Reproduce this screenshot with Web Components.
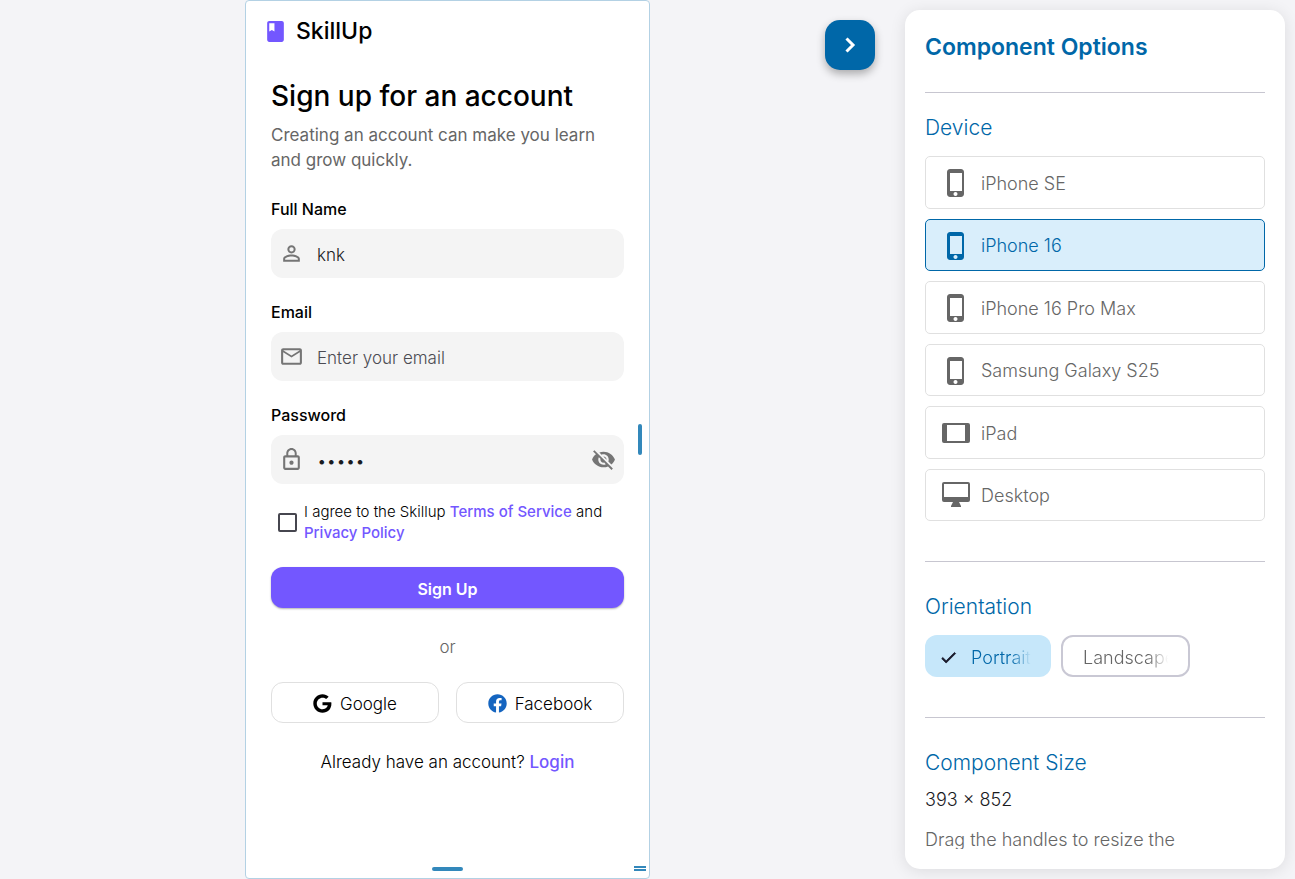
<!DOCTYPE html>
<html lang="en">
<head>
<meta charset="utf-8">
<meta name="viewport" content="width=device-width, initial-scale=1">
<title>SkillUp – Component preview</title>
<style>
  html { height: 100%; }
  body {
    margin: 0;
    min-height: 100%;
    background: #f4f4f7;
    font-family: Inter, "Liberation Sans", sans-serif;
    font-size: 17px;
    font-weight: 300;
    color: #000;
  }
</style>
</head>
<body>
<preview-app></preview-app>

<script>
const ICONS = {
  logo: ['0 0 24 24', '<path d="M18 2H6c-1.100 0-2 .9-2 2v16c0 1.100.9 2 2 2h12c1.100 0 2-.9 2-2V4c0-1.100-.9-2-2-2zM6 4h5v8l-2.500-1.500L6 12V4z"/>'],
  person: ['0 0 24 24', '<path d="M12 5.900a2.100 2.100 0 1 1 0 4.200 2.100 2.100 0 0 1 0-4.200m0 9c2.970 0 6.100 1.460 6.100 2.100v1.100H5.900V17c0-.64 3.130-2.100 6.100-2.100M12 4C9.790 4 8 5.790 8 8s1.790 4 4 4 4-1.790 4-4-1.790-4-4-4zm0 9c-2.670 0-8 1.340-8 4v3h16v-3c0-2.660-5.330-4-8-4z"/>'],
  mail: ['0 0 24 24', '<path d="M22 6c0-1.100-.9-2-2-2H4c-1.100 0-2 .9-2 2v12c0 1.100.9 2 2 2h16c1.100 0 2-.9 2-2V6zm-2 0l-8 5-8-5h16zm0 12H4V8l8 5 8-5v10z"/>'],
  lock: ['0 0 24 24', '<path d="M12 17c1.100 0 2-.9 2-2s-.9-2-2-2-2 .9-2 2 .9 2 2 2zm6-9h-1V6c0-2.760-2.240-5-5-5S7 3.240 7 6v2H6c-1.100 0-2 .9-2 2v10c0 1.100.9 2 2 2h12c1.100 0 2-.9 2-2V10c0-1.100-.9-2-2-2zM8.900 6c0-1.710 1.390-3.100 3.100-3.100s3.100 1.390 3.100 3.100v2H8.900V6zM18 20H6V10h12v10z"/>'],
  eyeOff: ['0 0 24 24', '<path d="M12 7c2.760 0 5 2.240 5 5 0 .65-.13 1.260-.36 1.830l2.920 2.920c1.510-1.260 2.700-2.890 3.430-4.750-1.730-4.390-6-7.500-11-7.500-1.400 0-2.740.25-3.980.7l2.160 2.160C10.740 7.130 11.350 7 12 7zM2 4.270l2.280 2.280.46.46C3.080 8.300 1.780 10.020 1 12c1.730 4.390 6 7.500 11 7.500 1.550 0 3.030-.3 4.380-.84l.42.42L19.730 22 21 20.730 3.270 3 2 4.270zM7.530 9.800l1.550 1.550c-.05.21-.08.43-.08.65 0 1.660 1.340 3 3 3 .22 0 .44-.03.65-.08l1.550 1.550c-.67.33-1.410.53-2.200.53-2.760 0-5-2.240-5-5 0-.79.2-1.530.53-2.200zm4.310-.78l3.150 3.150.02-.16c0-1.660-1.340-3-3-3l-.17.01z"/>'],
  google: ['0 0 496 512', '<path d="M488 261.800C488 403.300 391.100 504 248 504 110.800 504 0 393.200 0 256S110.800 8 248 8c66.800 0 123 24.500 166.300 64.900l-67.500 64.900C258.500 52.600 94.300 116.600 94.300 256c0 86.500 69.100 156.600 153.700 156.600 98.200 0 135-70.400 140.800-106.900H248v-85.300h236.100c2.300 12.700 3.900 24.900 3.900 41.400z"/>'],
  facebook: ['0 0 512 512', '<path d="M504 256C504 119 393 8 256 8S8 119 8 256c0 123.780 90.690 226.380 209.250 245V327.690h-63V256h63v-54.640c0-62.150 37-96.480 93.670-96.480 27.140 0 55.520 4.840 55.520 4.840v61h-31.280c-30.800 0-40.410 19.120-40.410 38.730V256h68.780l-11 71.690h-57.780V501C413.310 482.380 504 379.780 504 256z"/>'],
  phone: ['0 0 32 32', '<path fill-rule="evenodd" d="M10.500 2h10A3 3 0 0 1 24 5v22a3 3 0 0 1-3.500 3h-10A3 3 0 0 1 7 27V5a3 3 0 0 1 3.500-3zM10 6v18h12V6zM15.500 25a2 2 0 1 0 .01 0z"/>'],
  tablet: ['0 0 32 32', '<path fill-rule="evenodd" d="M4 6h24a2 2 0 0 1 2 2v16a2 2 0 0 1-2 2H4a2 2 0 0 1-2-2V8a2 2 0 0 1 2-2zM7 8v16h18V8z"/>'],
  desktop: ['0 0 32 32', '<path fill-rule="evenodd" d="M4 2h24a2 2 0 0 1 2 2v16a2 2 0 0 1-2 2h-9l2 4v1H11v-1l2-4H4a2 2 0 0 1-2-2V4a2 2 0 0 1 2-2zM4 4v13h24V4z"/>'],
  check: ['0 0 24 24', '<path stroke="currentColor" d="M9 16.170L4.830 12l-1.420 1.410L9 19 21 7l-1.410-1.410z"/>']
};

function define(name, css, render) {
  customElements.define(name, class extends HTMLElement {
    connectedCallback() {
      if (this.shadowRoot) return;
      const root = this.attachShadow({ mode: 'open' });
      const tpl = document.createElement('template');
      tpl.innerHTML = `<style>*{box-sizing:border-box}${css}</style>${render(this)}`;
      root.append(tpl.content.cloneNode(true));
    }
  });
}

define('ui-icon', `
  :host { display: block; flex: none; width: 25px; height: 25px; }
  svg { display: block; width: 100%; height: 100%; fill: currentColor; }
`, el => {
  const [box, body] = ICONS[el.getAttribute('name')];
  return `<svg viewBox="${box}" aria-hidden="true">${body}</svg>`;
});

define('form-field', `
  :host { display: block; }
  label { display: block; font-size: 16px; line-height: 20px; font-weight: 500; margin-bottom: 10px; }
  .box { display: flex; align-items: center; height: 49px; padding: 0 8px; gap: 13px; border-radius: 12px; background: #f4f4f4; color: #757575; }
  input { flex: 1; min-width: 0; border: 0; padding: 2px 0 0; outline: 0; background: none; font: inherit; line-height: 24px; color: #1a1b1f; }
  input::placeholder { color: #4b4b52; opacity: 1; }
  button { border: 0; padding: 0; background: none; color: inherit; }
`, el => `
  <label for="f">${el.getAttribute('label')}</label>
  <div class="box"><ui-icon name="${el.getAttribute('icon')}"></ui-icon>
    <input id="f" type="${el.getAttribute('type') || 'text'}" value="${el.getAttribute('value') || ''}" placeholder="${el.getAttribute('placeholder') || ''}">
    ${el.getAttribute('type') === 'password' ? '<button type="button" aria-label="Show password"><ui-icon name="eyeOff"></ui-icon></button>' : ''}
  </div>`);

define('terms-check', `
  :host { display: block; }
  .row { display: flex; align-items: center; gap: 7px; padding-left: 7px; font-size: 15px; line-height: 21px; }
  input { appearance: none; flex: none; width: 19px; height: 19px; margin: 0; border: 2px solid #46464f; border-radius: 2px; }
`, () => `<div class="row"><input id="t" type="checkbox"><label for="t"><slot></slot></label></div>`);

define('text-link', `
  :host { display: inline; }
  a { color: #7357ff; font-weight: 500; text-decoration: none; }
`, () => `<a href="#"><slot></slot></a>`);

define('primary-button', `
  :host { display: block; }
  button { display: block; width: 100%; height: 41px; padding: 2px 0 0; border: 0; border-radius: 12px; background: #7357ff; color: #fff; font: inherit; font-size: 16px; font-weight: 600; box-shadow: 0 1px 2px rgba(0,0,0,.3); }
`, () => `<button type="submit"><slot></slot></button>`);

define('social-button', `
  :host { display: block; flex: 1; }
  button { display: flex; align-items: center; justify-content: center; gap: 8px; width: 100%; height: 41px; padding: 2px 0 0; border: 1px solid #e0e0e0; border-radius: 12px; background: #fff; color: #000; font: inherit; }
  ui-icon { width: 19px; height: 19px; }
  ui-icon[name=facebook] { color: #1565c0; }
`, el => `<button type="button"><ui-icon name="${el.getAttribute('icon')}"></ui-icon><slot></slot></button>`);

define('signup-screen', `
  :host { display: block; }
  header { display: flex; align-items: center; gap: 8px; height: 60px; padding: 0 17px; }
  header span { font-size: 23px; line-height: 30px; font-weight: 500; }
  header ui-icon { color: #7357ff; }
  form { padding: 15px 25px 0; }
  h1 { margin: 0; font-size: 28px; line-height: 40px; font-weight: 500; white-space: nowrap; }
  .lead { margin: 7px 0 26px; line-height: 25px; font-weight: 400; color: #666; }
  .fields { display: flex; flex-direction: column; gap: 24px; }
  terms-check { margin-top: 17px; }
  primary-button { margin-top: 24px; }
  .or { margin: 27px 0 23px; text-align: center; line-height: 24px; color: #666; }
  .social { display: flex; gap: 17px; }
  .login { margin: 27px 0; text-align: center; line-height: 24px; }
  p { margin: 0; }
`, () => `
  <header><ui-icon name="logo"></ui-icon><span>SkillUp</span></header>
  <form>
    <h1>Sign up for an account</h1>
    <p class="lead">Creating an account can make you learn and grow quickly.</p>
    <div class="fields">
      <form-field label="Full Name" icon="person" value="knk"></form-field>
      <form-field label="Email" icon="mail" type="email" placeholder="Enter your email"></form-field>
      <form-field label="Password" icon="lock" type="password" value="12345"></form-field>
    </div>
    <terms-check>I agree to the Skillup <text-link>Terms of Service</text-link> and <text-link>Privacy Policy</text-link></terms-check>
    <primary-button>Sign Up</primary-button>
    <p class="or">or</p>
    <div class="social"><social-button icon="google">Google</social-button><social-button icon="facebook">Facebook</social-button></div>
    <p class="login">Already have an account? <text-link>Login</text-link></p>
  </form>`);

define('device-frame', `
  :host { display: block; position: relative; width: 405px; max-width: 100%; min-height: 100vh; box-sizing: border-box; border: 1px solid #b3d1e4; border-radius: 4px; background: #fff; }
  i { position: absolute; display: block; background: #3388bb; border-radius: 2px; }
  .e { right: 7px; top: 50%; width: 4px; height: 31px; margin-top: -16px; }
  .s { bottom: 7px; left: 50%; height: 4px; width: 31px; margin-left: -16px; }
  .se { right: 3px; bottom: 7px; width: 12px; height: 5px; border: solid #3388bb; border-width: 2px 0; border-radius: 0; background: none; }
`, () => `<slot></slot><i class="e"></i><i class="s"></i><i class="se"></i>`);

define('panel-toggle', `
  :host { position: absolute; top: 20px; right: 20px; display: block; }
  button { display: grid; place-items: center; width: 50px; height: 50px; padding: 0; border: 0; border-radius: 15px; background: #0067a8; color: #fff; box-shadow: 0 4px 8px rgba(0,0,0,.3); }
  svg { display: block; width: 26px; height: 26px; fill: none; stroke: #fff; stroke-width: 3; }
`, () => `<button type="button" aria-label="Collapse options"><svg viewBox="0 0 26 26" aria-hidden="true"><path d="M9.500 6.500l6.500 6.500-6.500 6.500"/></svg></button>`);

define('device-option', `
  :host { display: block; }
  button { display: flex; align-items: center; gap: 9px; width: 100%; height: 100%; padding: 2px 14px 0; border: 1px solid #e0e0e0; border-radius: 5px; background: #fff; color: #666; font: inherit; font-size: 18px; text-align: left; }
  ui-icon { width: 32px; height: 32px; }
  :host([selected]) button { background: #d9eefb; border-color: #0067a8; color: #0067a8; }
`, el => `<button type="button" aria-pressed="${el.hasAttribute('selected')}"><ui-icon name="${el.getAttribute('icon')}"></ui-icon><slot></slot></button>`);

define('choice-chip', `
  :host { display: block; }
  button { display: flex; align-items: center; gap: 13px; height: 42px; padding: 2px 20px 0; border: 2px solid #c9c8d4; border-radius: 12px; background: #fff; color: #666; font: inherit; font-size: 18px; }
  ui-icon { width: 19px; height: 19px; color: #1a1b2b; }
  span { display: block; overflow: hidden; width: 85px; text-align: left; white-space: nowrap; mask-image: linear-gradient(to right, #000 calc(100% - 20px), transparent); }
  :host([selected]) button { padding: 2px 20px 0 14px; border: 0; background: #c6e7fa; color: #0067a8; }
  :host([selected]) span { width: 60px; }
`, el => `<button type="button" aria-pressed="${el.hasAttribute('selected')}">${el.hasAttribute('selected') ? '<ui-icon name="check"></ui-icon>' : ''}<span><slot></slot></span></button>`);

define('options-panel', `
  :host { display: block; box-sizing: border-box; height: calc(100vh - 20px); padding: 20px; border-radius: 15px; background: #fff; box-shadow: 0 2px 16px rgba(0,0,0,.1); }
  .scroll { height: 100%; overflow-y: auto; scrollbar-width: none; }
  h2 { margin: 0 0 28px; font-size: 23px; line-height: 34px; font-weight: 600; color: #0067a8; }
  h3 { margin: 0; font-size: 21px; line-height: 30px; font-weight: 300; color: #0067a8; }
  hr { margin: 0; border: 0; height: 1px; background: #c7c6d0; }
  section { padding: 20px 0 40px; }
  .devices { display: grid; grid-auto-rows: 1fr; gap: 10px; min-height: 365px; margin-top: 13px; }
  .chips { display: flex; gap: 10px; margin-top: 13px; }
  section.tall { padding-top: 30px; }
  p { margin: 0; font-size: 18px; line-height: 30px; }
  .size { margin: 7px 0 10px; color: #1a1b1f; }
  .hint { color: #666; }
`, () => `
  <div class="scroll">
    <h2>Component Options</h2>
    <hr>
    <section>
      <h3>Device</h3>
      <div class="devices">
        <device-option icon="phone">iPhone SE</device-option>
        <device-option icon="phone" selected>iPhone 16</device-option>
        <device-option icon="phone">iPhone 16 Pro Max</device-option>
        <device-option icon="phone">Samsung Galaxy S25</device-option>
        <device-option icon="tablet">iPad</device-option>
        <device-option icon="desktop">Desktop</device-option>
      </div>
    </section>
    <hr>
    <section class="tall">
      <h3>Orientation</h3>
      <div class="chips"><choice-chip selected>Portrait</choice-chip><choice-chip>Landscape</choice-chip></div>
    </section>
    <hr>
    <section class="tall">
      <h3>Component Size</h3>
      <p class="size">393 × 852</p>
      <p class="hint">Drag the handles to resize the</p>
    </section>
  </div>`);

define('preview-app', `
  :host { display: grid; grid-template-columns: minmax(0, 1fr) 380px; gap: 10px; padding-right: 10px; align-items: start; }
  main { position: relative; display: flex; justify-content: center; }
  aside { margin: 10px 0; }
`, () => `
  <main><device-frame><signup-screen></signup-screen></device-frame><panel-toggle></panel-toggle></main>
  <aside><options-panel></options-panel></aside>`);
</script>
</body>
</html>
